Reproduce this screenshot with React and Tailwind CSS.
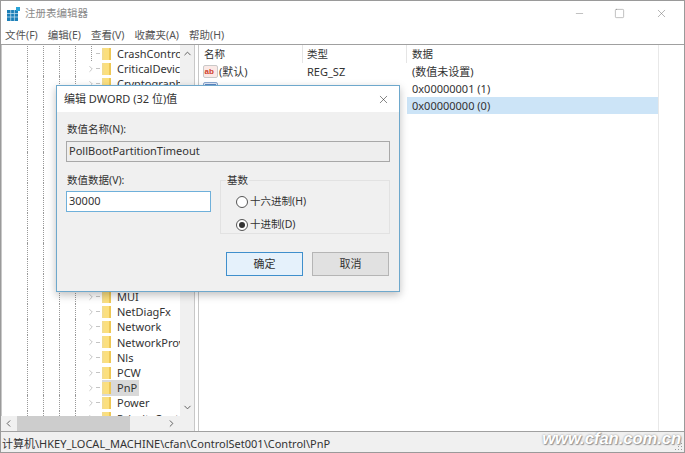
import { ChevronRight, ChevronUp, ChevronDown, ChevronLeft, X, Minus, Square } from 'lucide-react';

const FONT = 'font-["Noto_Sans","Noto_Sans_CJK_SC",sans-serif]';

const MENU = ['文件(F)', '编辑(E)', '查看(V)', '收藏夹(A)', '帮助(H)'];

const TREE = [
  { name: 'CrashControl', leaf: true },
  { name: 'CriticalDeviceDatabase' },
  { name: 'Cryptography' },
  { name: 'DeviceClasses' },
  { name: 'DeviceGuard' },
  { name: 'Diagnostics' },
  { name: 'Display' },
  { name: 'FileSystem' },
  { name: 'GraphicsDrivers' },
  { name: 'GroupOrderList' },
  { name: 'HAL' },
  { name: 'IDConfigDB' },
  { name: 'Keyboard Layouts' },
  { name: 'Lsa' },
  { name: 'MediaCategories' },
  { name: 'MSDTC' },
  { name: 'MUI' },
  { name: 'NetDiagFx' },
  { name: 'Network' },
  { name: 'NetworkProvider' },
  { name: 'Nls' },
  { name: 'PCW' },
  { name: 'PnP', selected: true },
  { name: 'Power' },
  { name: 'PriorityControl' },
];

function FolderIcon() {
  return (
    <svg width="9" height="14" viewBox="0 0 9 14" className="shrink-0">
      <rect x="0" y="1" width="2" height="12" fill="#f3dc8e" />
      <rect x="2" y="1" width="5" height="12" fill="#fbdf7e" />
      <rect x="7" y="1" width="2" height="12" fill="#eec755" />
    </svg>
  );
}

function TreeRow({ name, leaf, selected }) {
  return (
    <div className="flex items-center h-[15.2px] whitespace-nowrap">
      <div className="w-[25px] shrink-0" />
      {[0, 1, 2].map(i => (
        <div key={i} className="w-[16px] h-[15.2px] shrink-0 border-l border-dotted border-[#999]" />
      ))}
      <div className="w-[11px] h-[15.2px] shrink-0 border-l border-dotted border-[#999]" />
      <div className={`w-[10px] h-[15.2px] shrink-0 flex items-center justify-center ${leaf ? 'border-l border-dotted border-[#999] ml-[5px] !w-[5px]' : ''}`}>
        {!leaf && <ChevronRight size={12} strokeWidth={1.5} className="text-[#a0a0a0]" />}
      </div>
      <div className="w-[4px] h-px shrink-0 mr-[2px] bg-[#c4c4c4]" />
      <div className={`flex items-center h-[16px] pr-[2px] gap-[6px] ${selected ? 'bg-[#d9d9d9]' : ''}`}>
        <FolderIcon />
        <span className="text-[11px] leading-none text-[#333]">{name}</span>
      </div>
    </div>
  );
}

function StringIcon() {
  return (
    <svg width="15" height="15" viewBox="0 0 15 15" className="shrink-0">
      <rect x="0.5" y="1.5" width="14" height="12" rx="1.5" fill="#fbe9e6" stroke="#c9c9c9" />
      <text x="1.5" y="10" fontSize="8" fontWeight="700" fill="#d0402c" fontFamily="Liberation Sans">ab</text>
    </svg>
  );
}

function DwordIcon() {
  return (
    <svg width="15" height="15" viewBox="0 0 15 15" className="shrink-0">
      <rect x="0.5" y="1.5" width="14" height="12" rx="1.5" fill="#dfe9f7" stroke="#8aa7d0" />
      <rect x="2" y="3" width="11" height="4" fill="#5c86c4" />
    </svg>
  );
}

function ValueRow({ icon, name, type, data, selected }) {
  return (
    <div className="flex items-center h-[17px] text-[11px] text-[#333] leading-none whitespace-nowrap">
      <div className="w-[104px] pl-[4px] flex items-center gap-[1px] overflow-hidden">
        {icon}
        <span>{name}</span>
      </div>
      <div className="w-[104px] pl-[4px]">{type}</div>
      <div className={`w-[251px] h-full pl-[5px] flex items-center ${selected ? 'bg-[#cce4f7]' : ''}`}>{data}</div>
    </div>
  );
}

function Radio({ label, checked }) {
  return (
    <div className="flex items-center gap-[2px] text-[10.5px] leading-none text-[#333]">
      <div className="w-[12px] h-[12px] rounded-full border border-[#555] bg-white flex items-center justify-center">
        {checked && <div className="w-[6px] h-[6px] rounded-full bg-[#333]" />}
      </div>
      <span>{label}</span>
    </div>
  );
}

function EditDialog() {
  return (
    <div className="absolute left-[55px] top-[84px] w-[344px] h-[207px] bg-[#f0f0f0] border border-[#6ea8cc] shadow-[0_3px_8px_rgba(0,0,0,0.25)] text-[#333]">
      <div className="h-[26px] bg-white flex items-center justify-between pl-[7px] pr-[9px] text-[11px]">
        <span>编辑 DWORD (32 位)值</span>
        <X size={13} strokeWidth={1} className="text-[#222]" />
      </div>
      <div className="px-[9px] pt-[8px]">
        <div className="h-[18px] text-[10.5px] leading-[18px] pl-[1px]">数值名称(N):</div>
        <div className="mt-[3px] h-[21px] w-[324px] bg-[#eeeeee] border border-[#a8a8a8] flex items-center pl-[2px] text-[11px]">
          PollBootPartitionTimeout
        </div>
        <div className="flex mt-[7px] h-[66px]">
          <div className="w-[145px]">
            <div className="h-[18px] mt-[2px] text-[10.5px] leading-[18px] pl-[1px]">数值数据(V):</div>
            <div className="mt-[2px] h-[21px] w-[145px] bg-white border border-[#6fb0da] flex items-center pl-[2px] text-[11px]">
              30000
            </div>
          </div>
          <fieldset className="ml-[9px] w-[170px] h-[59px] border border-[#e2e2e2] pl-[15px] mt-[6px]">
            <legend className="text-[10.5px] leading-none px-[1px] -ml-[10px]">基数</legend>
            <div className="flex flex-col gap-[11px] pt-[10px]">
              <Radio label="十六进制(H)" />
              <Radio label="十进制(D)" checked />
            </div>
          </fieldset>
        </div>
        <div className="flex justify-end gap-[9px] mt-[17px] pr-[1px] text-[11px]">
          <div className="w-[77px] h-[24px] bg-[#e5f1fb] border border-[#3f8fcc] flex items-center justify-center">确定</div>
          <div className="w-[77px] h-[24px] bg-[#e1e1e1] border border-[#b5b5b5] flex items-center justify-center">取消</div>
        </div>
      </div>
    </div>
  );
}

export default function App() {
  return (
    <div className={`${FONT} relative w-[685px] h-[453px] bg-white border border-[#9a9a9a] overflow-hidden flex flex-col`}>
      {/* Title bar */}
      <div className="h-[25px] shrink-0 flex items-center justify-between pl-[6px]">
        <div className="flex items-center gap-[5px]">
          <svg width="13" height="14" viewBox="0 0 13 14">
            <rect x="0" y="3" width="11" height="11" fill="#1c7fb8" />
            <path d="M0 6.5H11M0 10H11M3.7 3V14M7.4 3V14" stroke="#cfe6f2" strokeWidth="0.7" />
            <rect x="9" y="0" width="4" height="4" fill="#2aa4d8" />
          </svg>
          <span className="text-[10.5px] text-[#8a8a8a] leading-none">注册表编辑器</span>
        </div>
        <div className="flex items-center text-[#777]">
          <div className="w-[40px] flex justify-center"><Minus size={11} strokeWidth={1} /></div>
          <div className="w-[40px] flex justify-center"><Square size={11} strokeWidth={1} /></div>
          <div className="w-[45px] flex justify-center"><X size={13} strokeWidth={1} /></div>
        </div>
      </div>

      {/* Menu */}
      <div className="h-[18px] shrink-0 flex items-center gap-[10px] pl-[4px] text-[10.5px] text-[#555] leading-none">
        {MENU.map(m => <span key={m}>{m}</span>)}
      </div>

      {/* Panels */}
      <div className="flex-1 min-h-0 flex border-t border-[#a0a0a0] border-b">
        {/* Tree */}
        <div className="w-[194px] shrink-0 flex flex-col border-r border-[#c8c8c8]">
          <div className="flex-1 min-h-0 flex">
            <div className="w-[179px] overflow-hidden pt-px border-l border-[#c8c8c8]">
              {TREE.map(t => <TreeRow key={t.name} {...t} />)}
            </div>
            <div className="w-[14px] bg-[#f0f0f0] flex flex-col justify-between items-center py-[3px]">
              <ChevronUp size={11} className="text-[#555]" />
              <ChevronDown size={11} className="text-[#555]" />
            </div>
          </div>
          <div className="h-[15px] shrink-0 bg-[#f0f0f0] flex items-center pl-[2px]">
            <ChevronLeft size={11} className="text-[#555] shrink-0" />
            <div className="w-[113px] h-full bg-[#cdcdcd] ml-[3px] shrink-0" />
            <ChevronRight size={11} className="text-[#555] ml-[36px] shrink-0" />
          </div>
        </div>

        {/* Splitter */}
        <div className="w-[3px] shrink-0" />

        {/* Values */}
        <div className="flex-1 min-w-0 border-l border-[#c8c8c8]">
          <div className="w-[460px] h-full border-r border-[#e8e8e8]">
            <div className="flex h-[18px] items-center text-[10.5px] text-[#333] leading-none">
              <div className="w-[104px] h-full pl-[5px] flex items-center border-r border-[#e5e5e5]">名称</div>
              <div className="w-[104px] h-full pl-[4px] flex items-center border-r border-[#e5e5e5]">类型</div>
              <div className="w-[251px] h-full pl-[5px] flex items-center">数据</div>
            </div>
            <ValueRow icon={<StringIcon />} name="(默认)" type="REG_SZ" data="(数值未设置)" />
            <ValueRow icon={<DwordIcon />} name="BlockLevel" type="REG_DWORD" data="0x00000001 (1)" />
            <ValueRow icon={<DwordIcon />} name="PollBootPartitionTimeout" type="REG_DWORD" data="0x00000000 (0)" selected />
          </div>
        </div>
      </div>

      {/* Status bar */}
      <div className="h-[20px] shrink-0 bg-[#f0f0f0] flex items-center pl-px pt-[2px] text-[11px] text-[#333] leading-none">
        计算机\HKEY_LOCAL_MACHINE\cfan\ControlSet001\Control\PnP
      </div>

      <EditDialog />

      {/* Watermark */}
      <div className="absolute right-[3px] bottom-[6px] font-['Liberation_Sans',sans-serif] italic font-bold text-[16.5px] leading-none text-white [text-shadow:0_0_2px_#888,1px_1px_1px_#999]">
        www.cfan.com.cn
      </div>
      {/* Resize grip */}
      <svg width="8" height="8" viewBox="0 0 8 8" className="absolute right-px bottom-px">
        <path d="M6 0h1v1H6zM3 3h1v1H3zM6 3h1v1H6zM0 6h1v1H0zM3 6h1v1H3zM6 6h1v1H6z" fill="#9a9a9a" />
      </svg>
    </div>
  );
}
